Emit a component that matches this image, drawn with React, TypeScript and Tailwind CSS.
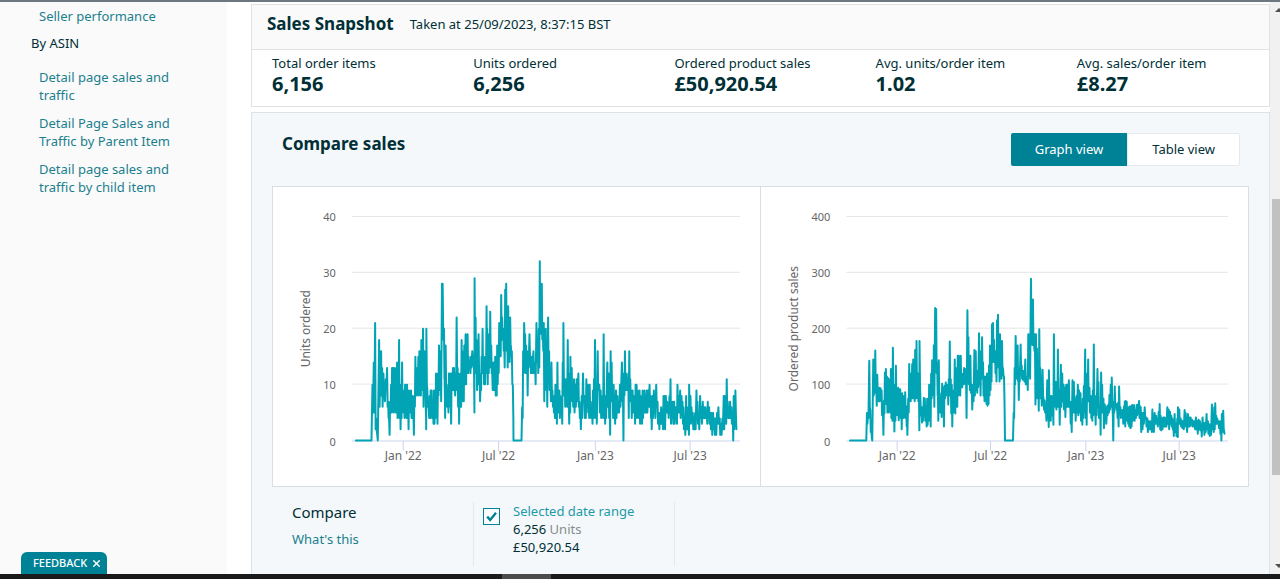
import { useState } from 'react'
import { X } from 'lucide-react'

// [x, low, high] per sample, x runs from 0 to the plot's span
type Sample = [number, number, number]

interface ChartProps {
  title: string
  ticks: number[]
  months: { label: string; x: number }[]
  left: number
  right: number
  titleX: number
  samples: Sample[]
}

const unitSamples: Sample[] = [
  [12, 0, 0], [59, 0, 0], [62, 5, 10], [66, 5, 14], [70, 2, 21], [73, 2, 4], [78, 0, 0], [82, 6, 18], [85, 8, 12], [88, 8, 16],
  [91, 6, 13], [95, 8, 12], [98, 7, 10], [102, 9, 11], [106, 6, 13], [109, 4, 7], [112, 1, 4], [115, 5, 7], [118, 5, 10], [121, 8, 13],
  [124, 5, 13], [127, 6, 13], [130, 5, 12], [133, 5, 13], [136, 4, 14], [139, 5, 9], [142, 4, 18], [145, 2, 10], [148, 4, 9], [151, 6, 14],
  [154, 5, 9], [157, 4, 8], [160, 5, 10], [163, 4, 10], [166, 4, 10], [169, 2, 8], [172, 5, 9], [175, 5, 8], [178, 4, 9], [182, 4, 8],
  [185, 1, 5], [188, 6, 8], [191, 9, 15], [194, 8, 13], [197, 10, 13], [200, 8, 15], [203, 9, 16], [206, 8, 14], [209, 9, 18], [212, 9, 17],
  [214, 6, 20], [218, 8, 16], [221, 5, 13], [222, 2, 11], [224, 10, 20], [227, 6, 9], [231, 4, 6], [234, 4, 8], [237, 5, 9], [240, 4, 9],
  [244, 3, 6], [247, 3, 9], [250, 4, 7], [253, 7, 12], [256, 3, 11], [259, 8, 12], [262, 9, 17], [265, 9, 16], [267, 7, 14], [271, 18, 28],
  [273, 20, 28], [277, 11, 20], [279, 4, 11], [282, 9, 17], [285, 6, 10], [289, 5, 8], [292, 8, 12], [295, 6, 12], [297, 3, 10], [300, 9, 12],
  [304, 9, 13], [307, 10, 13], [309, 8, 11], [312, 9, 12], [315, 12, 22], [318, 6, 13], [321, 3, 12], [324, 6, 11], [327, 6, 12], [330, 7, 18],
  [333, 10, 16], [335, 7, 13], [338, 10, 17], [342, 10, 19], [345, 12, 18], [348, 12, 19], [351, 13, 15], [355, 12, 14], [358, 13, 15], [362, 14, 16],
  [365, 13, 14], [367, 5, 15], [369, 14, 29], [372, 12, 22], [375, 9, 18], [378, 10, 15], [381, 12, 19], [384, 7, 12], [387, 9, 10], [390, 12, 15],
  [393, 12, 20], [396, 10, 15], [399, 10, 13], [402, 12, 15], [405, 14, 24], [407, 10, 20], [410, 12, 19], [413, 13, 17], [416, 14, 23], [419, 12, 17],
  [422, 9, 12], [425, 9, 14], [428, 9, 14], [431, 8, 15], [434, 8, 13], [437, 10, 17], [440, 12, 16], [443, 15, 21], [446, 15, 20], [449, 18, 26],
  [452, 18, 22], [455, 16, 20], [458, 13, 18], [461, 20, 27], [464, 16, 28], [467, 13, 22], [470, 16, 24], [473, 14, 20], [476, 16, 22], [478, 15, 17],
  [481, 10, 16], [484, 4, 10], [486, 0, 0], [510, 0, 0], [512, 4, 6], [515, 12, 16], [518, 17, 21], [521, 12, 19], [524, 12, 17], [527, 8, 16],
  [530, 13, 15], [534, 15, 19], [537, 12, 15], [540, 12, 15], [546, 12, 16], [551, 10, 14], [555, 14, 21], [559, 12, 16], [562, 13, 20], [565, 19, 32],
  [568, 19, 24], [571, 18, 28], [574, 16, 20], [577, 7, 21], [580, 12, 18], [583, 9, 20], [586, 6, 15], [590, 12, 22], [593, 9, 16], [597, 7, 12],
  [600, 8, 14], [603, 6, 9], [606, 5, 8], [609, 4, 7], [612, 4, 10], [615, 3, 7], [618, 5, 14], [621, 5, 9], [624, 4, 9], [627, 5, 8],
  [631, 3, 7], [634, 8, 14], [636, 10, 21], [640, 6, 11], [643, 7, 11], [646, 6, 8], [649, 8, 18], [652, 3, 7], [655, 5, 12], [657, 8, 15],
  [661, 7, 13], [664, 6, 10], [668, 5, 11], [672, 6, 10], [676, 7, 11], [681, 6, 12], [684, 4, 7], [687, 2, 6], [691, 4, 8], [695, 7, 12],
  [699, 4, 8], [702, 4, 8], [705, 6, 11], [709, 5, 10], [712, 4, 8], [715, 5, 10], [718, 4, 7], [722, 3, 6], [725, 4, 9], [728, 7, 11],
  [731, 4, 18], [735, 3, 9], [739, 9, 16], [744, 5, 10], [748, 4, 9], [751, 5, 8], [754, 4, 8], [757, 6, 19], [760, 3, 7], [763, 4, 8],
  [768, 6, 14], [772, 4, 12], [775, 1, 9], [778, 8, 16], [781, 7, 14], [784, 4, 9], [787, 5, 10], [790, 3, 8], [794, 4, 9], [798, 5, 8],
  [802, 5, 7], [806, 6, 10], [812, 7, 14], [815, 0, 8], [818, 8, 12], [821, 9, 16], [824, 9, 12], [828, 9, 11], [831, 4, 12], [834, 9, 16],
  [837, 7, 11], [840, 4, 9], [844, 5, 9], [847, 5, 8], [850, 3, 8], [853, 4, 10], [856, 5, 10], [859, 4, 9], [862, 5, 8], [865, 3, 9],
  [868, 4, 8], [871, 3, 8], [874, 4, 9], [877, 5, 8], [880, 5, 9], [883, 5, 8], [887, 5, 9], [891, 6, 9], [895, 6, 10], [898, 4, 8],
  [900, 2, 7], [904, 4, 8], [908, 5, 9], [911, 4, 8], [915, 6, 10], [919, 3, 7], [923, 2, 5], [926, 3, 5], [930, 3, 6], [934, 2, 5],
  [937, 5, 8], [940, 2, 8], [944, 5, 8], [948, 5, 7], [951, 4, 6], [955, 5, 8], [958, 3, 11], [961, 4, 7], [965, 3, 7], [969, 3, 7],
  [973, 4, 6], [976, 3, 6], [979, 5, 10], [983, 5, 8], [987, 4, 9], [991, 5, 8], [994, 3, 7], [997, 2, 6], [1001, 1, 4], [1005, 2, 8],
  [1008, 2, 6], [1012, 1, 5], [1014, 6, 10], [1018, 3, 8], [1021, 4, 6], [1025, 2, 5], [1028, 2, 4], [1032, 2, 5], [1036, 4, 9], [1039, 3, 7],
  [1043, 2, 5], [1047, 4, 8], [1051, 3, 6], [1055, 4, 7], [1059, 4, 6], [1063, 4, 6], [1067, 3, 5], [1070, 4, 7], [1074, 3, 6], [1078, 2, 5],
  [1082, 1, 5], [1086, 2, 5], [1090, 1, 4], [1094, 1, 4], [1098, 3, 5], [1102, 3, 6], [1106, 1, 4], [1110, 1, 3], [1114, 2, 4], [1118, 2, 8],
  [1121, 4, 8], [1124, 3, 8], [1127, 5, 11], [1130, 4, 7], [1134, 4, 5], [1137, 4, 7], [1141, 3, 6], [1145, 0, 5], [1148, 2, 8], [1151, 3, 8],
  [1153, 5, 9], [1156, 2, 2],
]

const salesSamples: Sample[] = [
  [11, 0, 0], [60, 0, 0], [62, 30, 50], [65, 40, 50], [69, 60, 143], [72, 15, 55], [75, 5, 30], [78, 0, 0], [81, 80, 145], [84, 85, 120],
  [87, 90, 161], [90, 62, 100], [93, 80, 118], [96, 70, 95], [99, 70, 95], [103, 78, 94], [106, 45, 90], [110, 10, 55], [113, 48, 72], [116, 80, 122],
  [119, 65, 128], [122, 50, 115], [125, 50, 112], [128, 65, 110], [131, 50, 100], [134, 40, 128], [137, 35, 128], [140, 60, 166], [143, 16, 70], [146, 35, 100],
  [149, 60, 134], [152, 45, 90], [156, 36, 95], [159, 45, 90], [162, 40, 92], [165, 20, 80], [168, 45, 85], [171, 40, 80], [174, 48, 78], [177, 40, 87],
  [180, 25, 62], [182, 10, 60], [186, 50, 75], [189, 80, 137], [192, 70, 115], [195, 90, 120], [198, 75, 137], [201, 80, 145], [204, 70, 130], [207, 85, 162],
  [209, 75, 155], [211, 80, 178], [215, 70, 120], [218, 18, 110], [220, 100, 178], [223, 45, 70], [226, 32, 50], [229, 35, 60], [233, 45, 77], [236, 35, 75],
  [240, 25, 50], [243, 28, 75], [246, 35, 60], [249, 45, 100], [252, 25, 85], [255, 75, 120], [258, 85, 144], [261, 80, 130], [263, 60, 170], [267, 170, 237],
  [270, 120, 235], [273, 80, 140], [275, 35, 100], [278, 70, 144], [281, 50, 85], [285, 42, 70], [288, 65, 102], [290, 50, 95], [292, 25, 80], [295, 75, 98],
  [299, 80, 104], [302, 85, 100], [305, 64, 95], [308, 90, 110], [311, 80, 177], [314, 48, 110], [317, 25, 100], [320, 50, 90], [323, 60, 90], [326, 48, 145],
  [329, 60, 130], [332, 60, 110], [335, 80, 152], [338, 85, 152], [341, 80, 145], [344, 95, 152], [347, 95, 115], [351, 100, 120], [354, 105, 130], [357, 100, 128],
  [360, 40, 110], [364, 130, 233], [367, 100, 185], [370, 90, 150], [373, 85, 152], [377, 55, 100], [381, 70, 100], [385, 80, 162], [389, 90, 160], [392, 85, 120],
  [395, 95, 125], [399, 100, 192], [402, 80, 160], [405, 110, 145], [408, 120, 185], [411, 80, 140], [414, 70, 100], [417, 75, 115], [420, 65, 110], [423, 62, 120],
  [426, 65, 110], [429, 80, 135], [432, 90, 170], [435, 105, 145], [438, 150, 208], [441, 140, 210], [444, 140, 180], [447, 120, 160], [450, 105, 145], [453, 140, 215],
  [456, 130, 225], [459, 105, 170], [462, 115, 190], [465, 110, 160], [468, 120, 178], [471, 115, 130], [474, 70, 115], [477, 0, 0], [501, 0, 0], [503, 40, 50],
  [506, 100, 130], [509, 130, 187], [512, 110, 170], [515, 105, 170], [517, 72, 130], [520, 105, 125], [524, 125, 172], [527, 110, 135], [530, 108, 125], [534, 105, 125],
  [538, 100, 145], [541, 100, 115], [544, 90, 115], [547, 115, 190], [551, 110, 190], [555, 190, 289], [558, 170, 220], [561, 170, 252], [564, 160, 180], [567, 64, 190],
  [570, 110, 190], [573, 75, 165], [577, 53, 120], [580, 120, 199], [583, 75, 130], [586, 62, 100], [590, 80, 127], [593, 55, 75], [596, 50, 72], [600, 35, 62],
  [604, 40, 108], [607, 24, 65], [609, 60, 126], [613, 35, 80], [617, 45, 80], [621, 28, 65], [624, 100, 190], [627, 60, 100], [630, 55, 105], [633, 60, 95],
  [636, 60, 163], [640, 28, 90], [645, 60, 136], [649, 70, 120], [653, 55, 100], [657, 42, 95], [661, 60, 100], [665, 60, 100], [669, 60, 108], [673, 30, 70],
  [676, 15, 55], [680, 50, 108], [684, 50, 105], [688, 35, 75], [692, 50, 80], [696, 45, 100], [700, 50, 90], [704, 35, 85], [708, 28, 60], [711, 40, 75],
  [714, 50, 98], [718, 40, 163], [721, 28, 90], [724, 70, 120], [727, 70, 145], [731, 50, 95], [735, 40, 80], [738, 35, 70], [741, 45, 90], [744, 60, 172],
  [748, 28, 60], [751, 45, 80], [755, 60, 128], [758, 40, 105], [763, 10, 65], [766, 60, 122], [769, 50, 100], [773, 22, 75], [777, 40, 65], [780, 30, 60],
  [784, 45, 62], [788, 50, 65], [791, 55, 82], [795, 60, 100], [798, 60, 113], [801, 0, 50], [804, 50, 70], [807, 60, 97], [811, 55, 66], [814, 40, 60],
  [817, 25, 68], [820, 60, 97], [824, 40, 60], [827, 45, 55], [831, 30, 55], [835, 40, 62], [837, 25, 70], [840, 40, 71], [843, 35, 70], [846, 30, 55],
  [849, 25, 60], [853, 22, 62], [856, 25, 55], [859, 35, 64], [862, 40, 60], [865, 35, 64], [869, 40, 55], [873, 45, 64], [877, 50, 65], [880, 40, 71],
  [883, 45, 62], [885, 15, 60], [889, 20, 50], [893, 30, 50], [897, 40, 60], [901, 25, 42], [905, 15, 40], [909, 20, 35], [913, 20, 35], [917, 15, 35],
  [920, 30, 56], [923, 15, 45], [927, 30, 50], [931, 30, 45], [935, 25, 40], [939, 30, 52], [942, 20, 66], [945, 18, 45], [949, 20, 40], [953, 25, 42],
  [957, 25, 42], [961, 25, 40], [965, 30, 60], [969, 20, 56], [973, 30, 52], [977, 25, 45], [980, 20, 40], [983, 8, 30], [987, 15, 48], [991, 8, 30],
  [995, 6, 40], [997, 30, 60], [1001, 30, 56], [1005, 25, 40], [1009, 22, 36], [1013, 20, 35], [1017, 25, 55], [1020, 30, 50], [1023, 15, 35], [1027, 25, 48],
  [1031, 25, 42], [1035, 28, 42], [1039, 25, 38], [1043, 25, 35], [1047, 20, 35], [1051, 20, 42], [1055, 12, 35], [1059, 20, 38], [1063, 18, 35], [1067, 7, 30],
  [1071, 20, 42], [1075, 10, 32], [1079, 15, 32], [1083, 20, 48], [1087, 12, 35], [1091, 8, 30], [1095, 10, 30], [1099, 20, 65], [1103, 15, 50], [1106, 20, 60],
  [1109, 30, 67], [1112, 30, 45], [1115, 30, 40], [1119, 22, 35], [1123, 12, 35], [1126, 0, 30], [1129, 15, 48], [1133, 20, 54], [1137, 12, 12],
]

const stats = [
  { label: 'Total order items', value: '6,156' },
  { label: 'Units ordered', value: '6,256' },
  { label: 'Ordered product sales', value: '£50,920.54' },
  { label: 'Avg. units/order item', value: '1.02' },
  { label: 'Avg. sales/order item', value: '£8.27' },
]

const asinLinks = [
  'Detail page sales and traffic',
  'Detail Page Sales and Traffic by Parent Item',
  'Detail page sales and traffic by child item',
]

const BASE = 254.5
const TOP = 29.5

function Chart({ title, ticks, months, left, right, titleX, samples }: ChartProps) {
  const max = ticks[ticks.length - 1]
  const y = (v: number) => BASE - (v / max) * (BASE - TOP)
  const gridY = (v: number) => Math.round(y(v)) + 0.5
  const line = samples
    .map(([x, lo, hi]) => {
      const px = left + x / 3
      return hi === lo ? `${px},${y(lo) - 0.5}` : `${px},${y(hi)} ${px + 0.5},${y(lo) - 0.5}`
    })
    .join(' ')

  return (
    <svg viewBox="0 0 488 300" className="block w-full" role="img" aria-label={title}>
      {ticks.map((t) => (
        <g key={t}>
          <line x1={left} x2={right} y1={gridY(t) - 1} y2={gridY(t) - 1} stroke={t === 0 ? '#ccd6eb' : '#e6e6e6'} />
          <text x={left - 16} y={gridY(t) + 4} textAnchor="end" fontSize="11" fill="#666666">{t}</text>
        </g>
      ))}
      {months.map((m) => (
        <g key={m.label}>
          <line x1={m.x} x2={m.x} y1={BASE} y2={BASE + 10} stroke="#ccd6eb" />
          <text x={m.x} y={BASE + 19} textAnchor="middle" fontSize="12" fill="#666666">{m.label}</text>
        </g>
      ))}
      <text transform={`translate(${titleX} 142) rotate(-90)`} textAnchor="middle" fontSize="12" fill="#666666">{title}</text>
      <polyline points={line} fill="none" stroke="#00a4b4" strokeWidth="2" strokeLinejoin="round" strokeLinecap="round" />
    </svg>
  )
}

export default function App() {
  const [view, setView] = useState<'graph' | 'table'>('graph')
  const [selected, setSelected] = useState(true)

  const tab = (active: boolean) =>
    active ? 'bg-[#008296] text-white' : 'border border-[#e7eaec] bg-white text-[#002f36]'

  return (
    <div className="flex h-screen flex-col overflow-hidden bg-white font-['Noto_Sans','Open_Sans',sans-serif] text-[13px] leading-[18px] text-[#002f36]">
      <div className="h-[2px] shrink-0 bg-[#6c777f]" />

      <div className="flex min-h-0 flex-1">
        {/* Sidebar */}
        <aside className="relative w-[227px] shrink-0 bg-[#fafafa]">
          <nav className="pt-[5px] pr-12 pl-[39px] text-[#1a7f8e]">
            <a href="#seller">Seller performance</a>
            <h2 className="-ml-2 pt-[9px] pb-4 text-[#002f36]">By ASIN</h2>
            <ul className="space-y-[10px]">
              {asinLinks.map((l) => (
                <li key={l}><a href="#asin">{l}</a></li>
              ))}
            </ul>
          </nav>
          <button className="absolute bottom-0 left-[21px] flex h-[22px] items-center gap-1 rounded-t-md bg-[#008296] pr-[5px] pl-3 text-[11px] font-medium text-white">
            FEEDBACK
            <X size={11} strokeWidth={3} />
          </button>
        </aside>

        {/* Report */}
        <main className="ml-6 flex min-w-0 flex-1 flex-col pt-[2px]">
          <section className="border border-[#dfe3e5]">
            <header className="flex h-[45px] items-center gap-4 border-b border-[#dfe3e5] bg-[#fafafa] pb-[6px] pl-[15px]">
              <h1 className="text-[17px] font-bold">Sales Snapshot</h1>
              <p>Taken at 25/09/2023, 8:37:15 BST</p>
            </header>
            <dl className="-mr-[9px] grid grid-cols-5 pt-[5px] pb-[10px] pl-5">
              {stats.map((s) => (
                <div key={s.label}>
                  <dt className="leading-[17px]">{s.label}</dt>
                  <dd className="text-xl leading-6 font-bold">{s.value}</dd>
                </div>
              ))}
            </dl>
          </section>

          <section className="mt-[5px] flex-1 border border-b-0 border-[#dfe3e5] bg-[#f4f8fa] px-5 pt-5">
            <div className="mb-5 flex items-start justify-between pr-[9px] pl-[10px]">
              <h2 className="text-[17px] leading-[22px] font-bold">Compare sales</h2>
              <div className="flex">
                <button onClick={() => setView('graph')} className={`h-[33px] rounded-l-[2px] px-6 pb-[2px] ${tab(view === 'graph')}`}>Graph view</button>
                <button onClick={() => setView('table')} className={`h-[33px] rounded-r-[2px] px-6 pb-[2px] ${tab(view === 'table')}`}>Table view</button>
              </div>
            </div>

            <div className="flex border border-[#d9dee0] bg-white">
              <div className="flex-1 border-r border-[#d9dee0]">
                <Chart
                  title="Units ordered"
                  ticks={[0, 10, 20, 30, 40]}
                  months={[{ label: "Jan '22", x: 130.5 }, { label: "Jul '22", x: 226 }, { label: "Jan '23", x: 323 }, { label: "Jul '23", x: 418 }]}
                  left={79}
                  right={468}
                  titleX={37}
                  samples={unitSamples}
                />
              </div>
              <div className="flex-1">
                <Chart
                  title="Ordered product sales"
                  ticks={[0, 100, 200, 300, 400]}
                  months={[{ label: "Jan '22", x: 136.5 }, { label: "Jul '22", x: 230 }, { label: "Jan '23", x: 325.5 }, { label: "Jul '23", x: 419 }]}
                  left={85.5}
                  right={468}
                  titleX={37}
                  samples={salesSamples}
                />
              </div>
            </div>

            <div className="mt-[15px] flex">
              <div className="w-[201px] pl-5">
                <h3 className="text-[15px] leading-5">Compare</h3>
                <a href="#help" className="mt-2 block text-[#1a7f8e]">What's this</a>
              </div>
              <label className="flex h-16 w-[202px] gap-[13px] border-x border-[#e3e8ea] pl-[9px]">
                <span className="relative mt-[6px] size-[17px]">
                  <input
                    type="checkbox"
                    checked={selected}
                    onChange={(e) => setSelected(e.target.checked)}
                    className="block size-[17px] appearance-none border border-[#008296] bg-white"
                  />
                  {selected && (
                    <svg viewBox="0 0 17 17" className="pointer-events-none absolute inset-0 size-[17px]">
                      <path d="M4.2 8.6 L7.2 12 L13 4.8" fill="none" stroke="#008296" strokeWidth="2.4" />
                    </svg>
                  )}
                </span>
                <span>
                  <span className="block text-[#1c9aa8]">Selected date range</span>
                  <span className="block">6,256 <span className="text-[#888c8c]">Units</span></span>
                  <span className="block">£50,920.54</span>
                </span>
              </label>
            </div>
          </section>
        </main>

        {/* Scroll track */}
        <div className="flex w-[10px] shrink-0 flex-col overflow-hidden bg-[#f1f1f1] pl-[2px]" aria-hidden="true">
          <svg viewBox="0 0 5 4" className="mt-[6px] ml-[3px] h-1 w-[5px] shrink-0"><path d="M0 4 L4 0 L8 4Z" fill="#505050" /></svg>
          <div className="mt-[187px] h-[276px] bg-[#c1c1c1]" />
          <svg viewBox="0 0 5 4" className="mt-auto mb-[6px] ml-[3px] h-1 w-[5px] shrink-0"><path d="M0 0 L4 4 L8 0Z" fill="#505050" /></svg>
        </div>
      </div>

      <div className="h-[5px] shrink-0 bg-[#1b1b1b] pl-[502px]">
        <div className="h-full w-[49px] bg-[#4c4c4c]" />
      </div>
    </div>
  )
}
